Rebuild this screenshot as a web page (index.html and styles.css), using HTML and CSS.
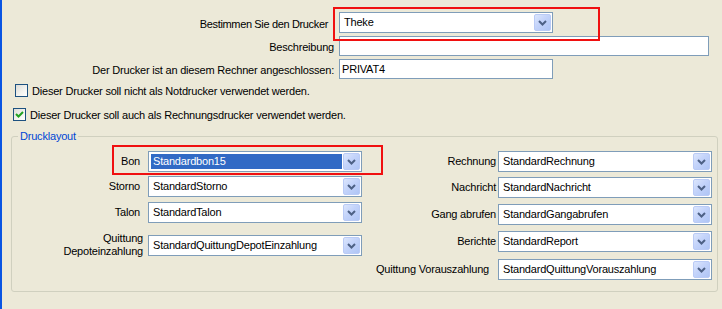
FILE: index.html
```html
<!DOCTYPE html>
<html>
<head>
<meta charset="utf-8">
<link rel="stylesheet" href="styles.css">
</head>
<body>
<div class="window">
  <div class="top-form">
    <label class="lbl lbl-first">Bestimmen Sie den Drucker</label>
    <div class="combo combo-short">
      <span class="combo-text">Theke</span>
      <span class="combo-btn"><svg width="17" height="17" viewBox="0 0 17 17"><polyline points="5,7 8.5,10.5 12,7" fill="none" stroke="#4D6185" stroke-width="2"/></svg></span>
      <span class="mark mark-top"></span>
    </div>
    <label class="lbl">Beschreibung</label>
    <div class="textbox textbox-long"></div>
    <label class="lbl">Der Drucker ist an diesem Rechner angeschlossen:</label>
    <div class="textbox textbox-short">PRIVAT4</div>
  </div>

  <div class="check-row check-1">
    <span class="checkbox"></span>
    <span class="check-text">Dieser Drucker soll nicht als Notdrucker verwendet werden.</span>
  </div>
  <div class="check-row check-2">
    <span class="checkbox"><svg width="11" height="11" viewBox="0 0 11 11"><polyline points="2,5 4.5,7.5 9,3" fill="none" stroke="#21A121" stroke-width="2"/></svg></span>
    <span class="check-text">Dieser Drucker soll auch als Rechnungsdrucker verwendet werden.</span>
  </div>

  <fieldset class="group">
    <legend>Drucklayout</legend>
    <div class="group-cols">
      <div class="col col-left">
        <div class="row r-bon">
          <span class="row-label">Bon</span>
          <div class="combo combo-group">
            <span class="combo-text selected">Standardbon15</span>
            <span class="combo-btn"><svg width="17" height="17" viewBox="0 0 17 17"><polyline points="5,7 8.5,10.5 12,7" fill="none" stroke="#4D6185" stroke-width="2"/></svg></span>
            <span class="mark mark-bon"></span>
          </div>
        </div>
        <div class="row r-storno">
          <span class="row-label">Storno</span>
          <div class="combo combo-group">
            <span class="combo-text">StandardStorno</span>
            <span class="combo-btn"><svg width="17" height="17" viewBox="0 0 17 17"><polyline points="5,7 8.5,10.5 12,7" fill="none" stroke="#4D6185" stroke-width="2"/></svg></span>
          </div>
        </div>
        <div class="row r-talon">
          <span class="row-label">Talon</span>
          <div class="combo combo-group">
            <span class="combo-text">StandardTalon</span>
            <span class="combo-btn"><svg width="17" height="17" viewBox="0 0 17 17"><polyline points="5,7 8.5,10.5 12,7" fill="none" stroke="#4D6185" stroke-width="2"/></svg></span>
          </div>
        </div>
        <div class="row r-quittung">
          <span class="row-label two-line">Quittung<br>Depoteinzahlung</span>
          <div class="combo combo-group">
            <span class="combo-text">StandardQuittungDepotEinzahlung</span>
            <span class="combo-btn"><svg width="17" height="17" viewBox="0 0 17 17"><polyline points="5,7 8.5,10.5 12,7" fill="none" stroke="#4D6185" stroke-width="2"/></svg></span>
          </div>
        </div>
      </div>

      <div class="col col-right">
        <div class="row r-rechnung">
          <span class="row-label">Rechnung</span>
          <div class="combo combo-group">
            <span class="combo-text">StandardRechnung</span>
            <span class="combo-btn"><svg width="17" height="17" viewBox="0 0 17 17"><polyline points="5,7 8.5,10.5 12,7" fill="none" stroke="#4D6185" stroke-width="2"/></svg></span>
          </div>
        </div>
        <div class="row r-nachricht">
          <span class="row-label">Nachricht</span>
          <div class="combo combo-group">
            <span class="combo-text">StandardNachricht</span>
            <span class="combo-btn"><svg width="17" height="17" viewBox="0 0 17 17"><polyline points="5,7 8.5,10.5 12,7" fill="none" stroke="#4D6185" stroke-width="2"/></svg></span>
          </div>
        </div>
        <div class="row r-gang">
          <span class="row-label">Gang abrufen</span>
          <div class="combo combo-group">
            <span class="combo-text">StandardGangabrufen</span>
            <span class="combo-btn"><svg width="17" height="17" viewBox="0 0 17 17"><polyline points="5,7 8.5,10.5 12,7" fill="none" stroke="#4D6185" stroke-width="2"/></svg></span>
          </div>
        </div>
        <div class="row r-berichte">
          <span class="row-label">Berichte</span>
          <div class="combo combo-group">
            <span class="combo-text">StandardReport</span>
            <span class="combo-btn"><svg width="17" height="17" viewBox="0 0 17 17"><polyline points="5,7 8.5,10.5 12,7" fill="none" stroke="#4D6185" stroke-width="2"/></svg></span>
          </div>
        </div>
        <div class="row r-voraus">
          <span class="row-label lbl-voraus">Quittung Vorauszahlung</span>
          <div class="combo combo-group">
            <span class="combo-text">StandardQuittungVorauszahlung</span>
            <span class="combo-btn"><svg width="17" height="17" viewBox="0 0 17 17"><polyline points="5,7 8.5,10.5 12,7" fill="none" stroke="#4D6185" stroke-width="2"/></svg></span>
          </div>
        </div>
      </div>
    </div>
  </fieldset>
</div>
</body>
</html>
```

FILE: styles.css
```css
* { box-sizing: border-box; }

html, body {
  margin: 0;
  padding: 0;
  background: #ECE9D8;
}

body {
  font-family: "Liberation Sans", Arial, sans-serif;
  font-size: 11px;
  letter-spacing: -0.2px;
  color: #000;
  width: 722px;
  height: 309px;
  overflow: hidden;
}

.window {
  height: 309px;
  border-left: 2px solid #0A55E3;
  padding-top: 12px;
}

/* ---------- top form ---------- */
.top-form {
  display: grid;
  grid-template-columns: 332px auto;
  column-gap: 5px;
  row-gap: 3px;
  justify-items: start;
}

.lbl {
  justify-self: end;
  align-self: center;
  line-height: 13px;
  padding-top: 2px;
}

.lbl-first {
  padding-right: 6px;
  padding-top: 3px;
  letter-spacing: -0.35px;
}

.textbox {
  height: 20px;
  border: 1px solid #7F9DB9;
  background: #fff;
  line-height: 18px;
  padding-left: 2px;
}

.textbox-long { width: 370px; }
.textbox-short { width: 214px; }

/* ---------- combo box ---------- */
.combo {
  position: relative;
  display: flex;
  height: 21px;
  border: 1px solid #7F9DB9;
  background: #fff;
  padding: 1px;
}

.combo-short { width: 214px; }
.combo-group { width: 214px; }

.combo-text {
  flex: 1;
  line-height: 17px;
  padding-left: 3px;
  margin-right: 1px;
  white-space: nowrap;
  overflow: hidden;
}

.combo-text.selected {
  margin: 1px 1px 1px 1px;
  line-height: 15px;
  padding-left: 2px;
  background: #316AC5;
  color: #fff;
}

.combo-btn {
  width: 17px;
  height: 17px;
  border-radius: 2px;
  border: 1px solid #BACBF6;
  background: linear-gradient(135deg, #DCE6FD 0%, #C3D3FA 45%, #AFC5F5 100%);
  display: flex;
  align-items: center;
  justify-content: center;
}

.combo-btn svg { display: block; margin: -1px; }

/* red annotation frames */
.mark {
  position: absolute;
  border: 2px solid #F01010;
  pointer-events: none;
}

.mark-top {
  left: -7px;
  top: -6px;
  width: 267px;
  height: 34px;
}

.mark-bon {
  left: -37px;
  top: -7px;
  width: 271px;
  height: 30px;
}

/* ---------- checkboxes ---------- */
.check-row {
  display: flex;
  align-items: center;
  height: 13px;
}

.check-1 { margin-top: 5px; padding-left: 13px; }
.check-2 { margin-top: 11px; padding-left: 11px; }

.checkbox {
  width: 13px;
  height: 13px;
  border: 1px solid #1C5180;
  background: linear-gradient(135deg, #DCDCD7 0%, #F4F4F0 60%, #FFFFFF 100%);
  display: flex;
  align-items: center;
  justify-content: center;
  margin-right: 4px;
}

.check-text { line-height: 13px; padding-top: 1px; }

/* ---------- group box ---------- */
.group {
  margin: 9px 4px 0 9px;
  padding: 0 5px 11px 0;
  border: 1px solid #D0D0BF;
  border-radius: 3px;
  min-width: 0;
}

.group legend {
  color: #0046D5;
  margin-left: 6px;
  padding: 0 2px;
  line-height: 13px;
}

.group-cols {
  display: flex;
  justify-content: space-between;
  padding-top: 8px;
}

.col {
  display: flex;
  flex-direction: column;
}

.row {
  display: flex;
  align-items: center;
}

.row-label {
  text-align: right;
  line-height: 13px;
}

.col-left .row-label {
  width: 128px;
  margin-right: 8px;
}

.col-right .row-label {
  width: 130px;
  margin-right: 2px;
}

.col-right .row-label.lbl-voraus {
  padding-right: 7px;
}

.col-left .row-label.two-line { width: 131px; margin-right: 5px; }

.r-storno { margin-top: 4px; }
.r-talon { margin-top: 5px; }
.r-quittung { margin-top: 9px; }

.r-nachricht { margin-top: 5px; }
.r-gang { margin-top: 6px; }
.r-berichte { margin-top: 6px; }
.r-voraus { margin-top: 7px; }
```
